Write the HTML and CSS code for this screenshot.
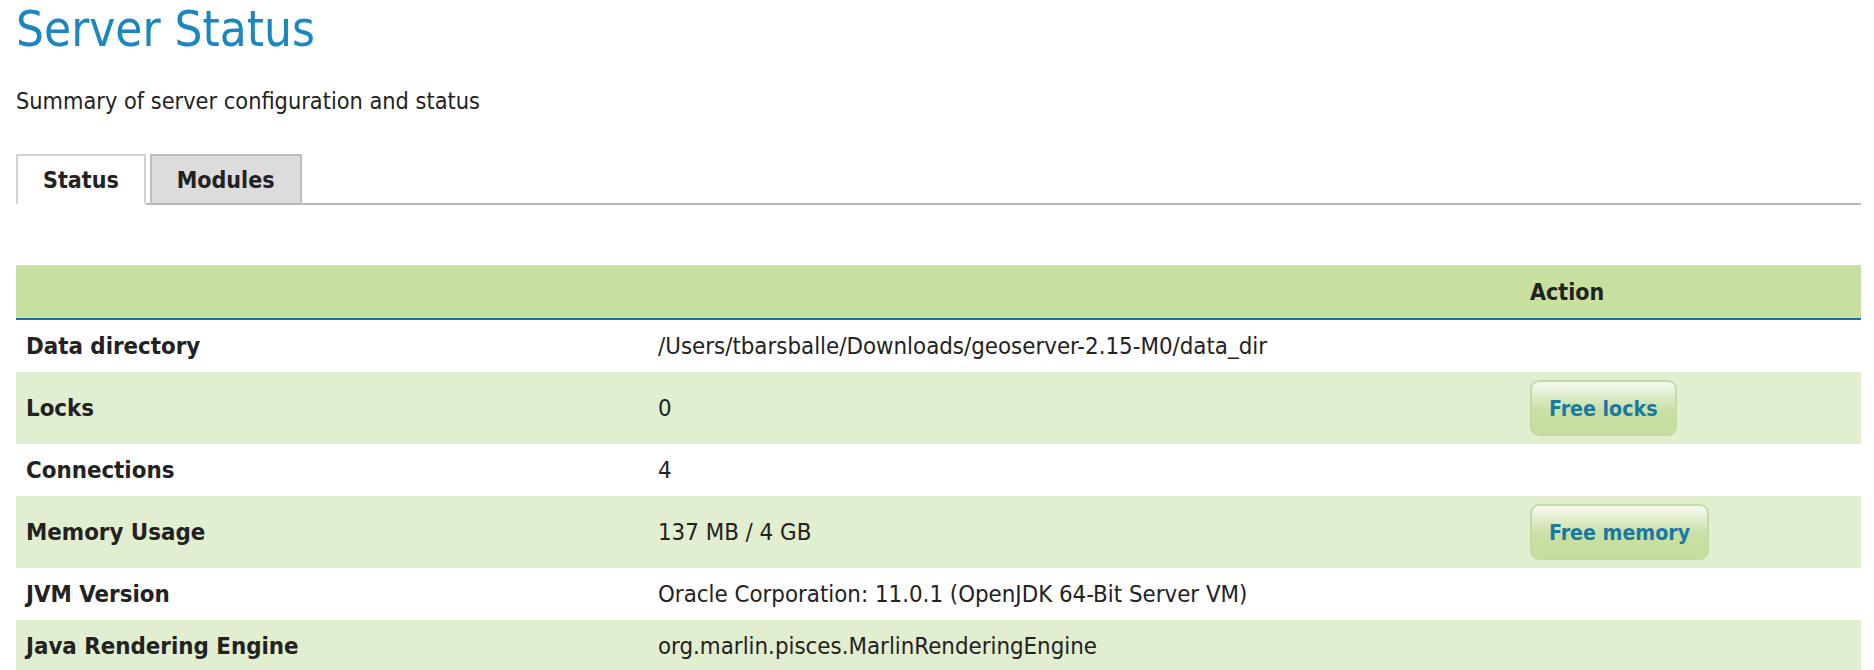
FILE: index.html
```html
<!DOCTYPE html>
<html>
<head>
<meta charset="utf-8">
<title>Server Status</title>
<link rel="stylesheet" href="styles.css">
</head>
<body>
<h1 class="title">Server Status</h1>
<p class="subtitle">Summary of server configuration and status</p>
<div class="tabs">
  <div class="tab tab-active">Status</div>
  <div class="tab">Modules</div>
</div>
<table class="status">
  <thead>
    <tr><th class="c-label"></th><th class="c-value"></th><th class="c-action">Action</th></tr>
  </thead>
  <tbody>
    <tr class="row"><td class="c-label">Data directory</td><td class="c-value">/Users/tbarsballe/Downloads/geoserver-2.15-M0/data_dir</td><td class="c-action"></td></tr>
    <tr class="row alt"><td class="c-label">Locks</td><td class="c-value">0</td><td class="c-action"><button class="btn">Free locks</button></td></tr>
    <tr class="row"><td class="c-label">Connections</td><td class="c-value">4</td><td class="c-action"></td></tr>
    <tr class="row alt"><td class="c-label">Memory Usage</td><td class="c-value">137 MB / 4 GB</td><td class="c-action"><button class="btn">Free memory</button></td></tr>
    <tr class="row"><td class="c-label">JVM Version</td><td class="c-value">Oracle Corporation: 11.0.1 (OpenJDK 64-Bit Server VM)</td><td class="c-action"></td></tr>
    <tr class="row alt"><td class="c-label">Java Rendering Engine</td><td class="c-value">org.marlin.pisces.MarlinRenderingEngine</td><td class="c-action"></td></tr>
  </tbody>
</table>
</body>
</html>
```
FILE: styles.css
```css
html, body {
  margin: 0;
  padding: 0;
  background: #ffffff;
}
body {
  padding: 0 13px 0 16px;
  font-family: "DejaVu Sans Condensed", "DejaVu Sans", sans-serif;
  color: #222222;
  overflow: hidden;
}
.title {
  margin: 0;
  font-size: 49px;
  line-height: 60px;
  font-weight: normal;
  color: #1b87c0;
}
.subtitle {
  margin: 27px 0 0 0;
  font-size: 23.3px;
  line-height: 28px;
}
.tabs {
  margin-top: 37px;
  display: flex;
  align-items: flex-end;
  border-bottom: 2px solid #b8b8b8;
  height: 51px;
}
.tab {
  box-sizing: border-box;
  height: 51px;
  margin-bottom: -2px;
  padding: 0 25px;
  display: flex;
  align-items: center;
  font-weight: bold;
  font-size: 23px;
  background: #dcdcdc;
  border: 2px solid #bdbdbd;
  border-bottom: 2px solid #b8b8b8;
  margin-right: 4px;
}
.tab-active {
  background: #ffffff;
  border-color: #d2d2d2;
  border-bottom-color: #ffffff;
  padding: 0 25px 0 25px;
}
.status {
  margin-top: 60px;
  width: 100%;
  border-collapse: collapse;
  font-size: 23.8px;
}
.status th {
  background: #c7df9f;
  height: 53px;
  border-bottom: 2px solid #1c7198;
  text-align: left;
  padding: 0 10px;
  font-weight: bold;
  font-size: 23px;
}
.status td {
  padding: 0 10px;
  height: 52px;
}
.c-label {
  width: 612px;
  font-weight: bold;
}
.c-value {
  width: 852px;
}
.row.alt td {
  background: #e2eed0;
}
.btn {
  display: block;
  box-sizing: border-box;
  height: 56px;
  margin: 8px 0;
  padding: 0 17px;
  font-family: inherit;
  font-size: 21.2px;
  font-weight: bold;
  color: #1a78a3;
  border: 2px solid #c2dca0;
  border-radius: 9px;
  background: linear-gradient(to bottom, #f6fbf2 0%, #dcebc4 30%, #c8e0a2 55%, #c6de9f 100%);
}
```
